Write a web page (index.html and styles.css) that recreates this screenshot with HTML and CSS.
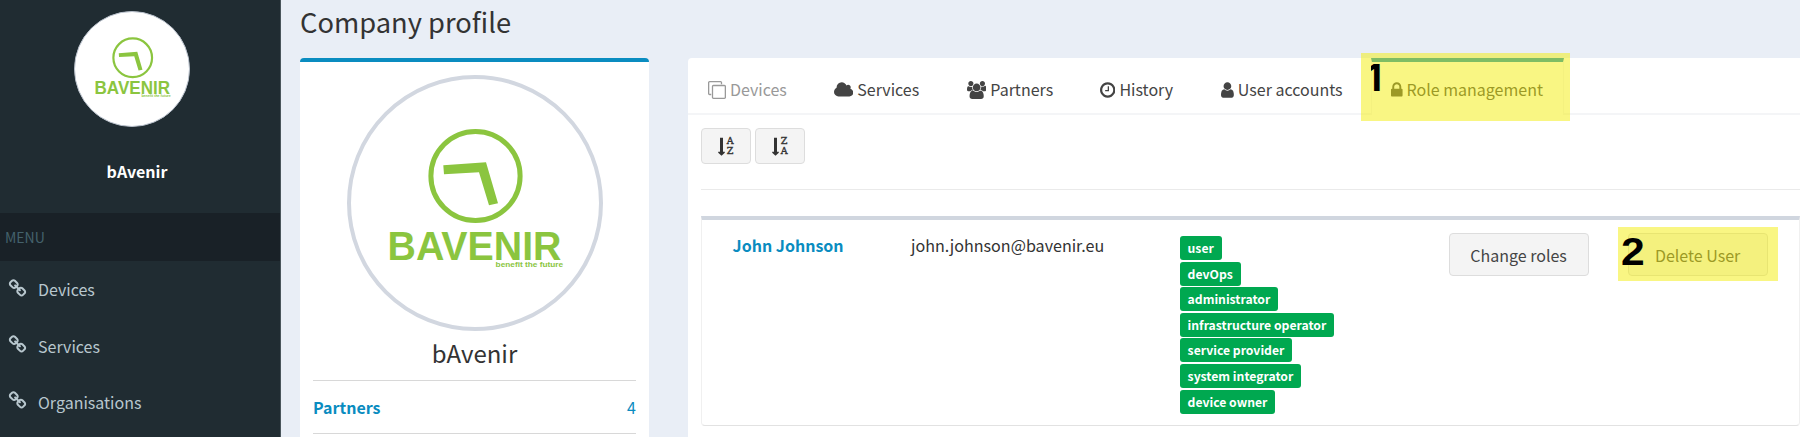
FILE: index.html
```html
<!DOCTYPE html>
<html lang="en">
<head>
<meta charset="utf-8">
<title>Company profile</title>
<link rel="stylesheet" href="styles.css">
</head>
<body>
<svg class="defs" width="0" height="0">
  <symbol id="logo" viewBox="0 0 256 256">
    <circle cx="128.5" cy="101" r="44.6" fill="none" stroke="#8bc53f" stroke-width="5"/>
    <path d="M96.300 90.300L139 87.300L151 128.300L142 130.300L132 97.300L97 99.300z" fill="#8bc53f"/>
    <text class="logo-name" x="40.500" y="184.600" textLength="174" lengthAdjust="spacingAndGlyphs">BAVENIR</text>
    <text class="logo-tag" x="148.600" y="191.800" textLength="67.600" lengthAdjust="spacingAndGlyphs">benefit the future</text>
  </symbol>
  <symbol id="link" viewBox="0 0 1792 1792"><path d="M1520 1216q0-40-28-68l-208-208q-28-28-68-28-42 0-72 32 3 3 19 18.500t21.500 21.500 15 19 13 25.500 3.500 27.500q0 40-28 68t-68 28q-15 0-27.500-3.500t-25.500-13-19-15-21.500-21.500-18.500-19q-33 31-33 73 0 40 28 68l206 207q27 27 68 27 40 0 68-26l147-146q28-28 28-67zm-703-705q0-40-28-68l-206-207q-28-28-68-28-39 0-68 27l-147 146q-28 28-28 67 0 40 28 68l208 208q27 27 68 27 42 0 72-31-3-3-19-18.500t-21.500-21.500-15-19-13-25.500-3.500-27.500q0-40 28-68t68-28q15 0 27.500 3.500t25.500 13 19 15 21.500 21.500 18.500 19q33-31 33-73zm895 705q0 120-85 203l-147 146q-83 83-203 83-121 0-204-85l-206-207q-83-83-83-203 0-123 88-209l-88-88q-86 88-208 88-120 0-204-84l-208-208q-84-84-84-204t85-203l147-146q83-83 203-83 121 0 204 85l206 207q83 83 83 203 0 123-88 209l88 88q86-88 208-88 120 0 204 84l208 208q84 84 84 204z"/></symbol>
</svg>

<div class="app">
  <aside class="sidebar">
    <div class="user-panel">
      <div class="avatar"><svg class="avatar-logo"><use href="#logo"/></svg></div>
      <div class="user-name">bAvenir</div>
    </div>
    <div class="menu-header">MENU</div>
    <nav class="menu">
      <a class="menu-item"><svg class="menu-icon"><use href="#link"/></svg><span>Devices</span></a>
      <a class="menu-item"><svg class="menu-icon"><use href="#link"/></svg><span>Services</span></a>
      <a class="menu-item"><svg class="menu-icon"><use href="#link"/></svg><span>Organisations</span></a>
    </nav>
  </aside>

  <main class="content">
    <h1 class="page-title">Company profile</h1>
    <div class="columns">
      <section class="profile">
        <div class="profile-picture"><svg class="profile-logo"><use href="#logo"/></svg></div>
        <h2 class="profile-name">bAvenir</h2>
        <div class="profile-row"><b>Partners</b><span>4</span></div>
      </section>

      <section class="panel">
        <nav class="tabs">
          <a class="tab tab-devices"><svg class="tab-icon" viewBox="0 0 1792 1792"><path d="M1664 1632v-1088q0-13-9.500-22.500t-22.500-9.500h-1088q-13 0-22.500 9.500t-9.500 22.500v1088q0 13 9.500 22.500t22.500 9.500h1088q13 0 22.500-9.500t9.500-22.500zm128-1088v1088q0 66-47 113t-113 47h-1088q-66 0-113-47t-47-113v-1088q0-66 47-113t113-47h1088q66 0 113 47t47 113zm-384-384v160h-128v-160q0-13-9.500-22.500t-22.500-9.500h-1088q-13 0-22.500 9.500t-9.500 22.500v1088q0 13 9.500 22.500t22.500 9.500h160v128h-160q-66 0-113-47t-47-113v-1088q0-66 47-113t113-47h1088q66 0 113 47t47 113z"/></svg><span>Devices</span></a>
          <a class="tab tab-services"><svg class="tab-icon" viewBox="64 0 1920 1792"><path d="M1984 1152q0 159-112.500 271.500t-271.500 112.500h-1088q-185 0-316.500-131.500t-131.500-316.500q0-132 71-241.500t187-163.500q-2-28-2-43 0-212 150-362t362-150q158 0 286.500 88t187.500 230q70-62 166-62 106 0 181 75t75 181q0 75-41 138 129 30 213 134.500t84 239.500z"/></svg><span>Services</span></a>
          <a class="tab tab-partners"><svg class="tab-icon" viewBox="0 0 1920 1792"><path d="M593 896q-162 5-265 128h-134q-82 0-138-40.500t-56-118.500q0-353 124-353 6 0 43.500 21t97.500 42.500 119 21.500q67 0 133-23-5 37-5 66 0 155 90 286zm1071 637q0 120-73 189.500t-194 69.500h-874q-121 0-194-69.500t-73-189.500q0-53 3.500-103.500t14-109 26.500-108.500 43-97.500 62-81 85.500-53.500 111.500-20q10 0 43 21.500t73 48 107 48 135 21.500 135-21.500 107-48 73-48 43-21.500q61 0 111.500 20t85.500 53.500 62 81 43 97.500 26.500 108.500 14 109 3.500 103.500zm-1024-1277q0 106-75 181t-181 75-181-75-75-181 75-181 181-75 181 75 75 181zm704 384q0 159-112.500 271.500t-271.500 112.500-271.500-112.500-112.500-271.500 112.500-271.500 271.500-112.500 271.500 112.500 112.500 271.500zm576 225q0 78-56 118.500t-138 40.500h-134q-103-123-265-128 90-131 90-286 0-29-5-66 66 23 133 23 59 0 119-21.500t97.500-42.500 43.500-21q124 0 124 353zm-128-609q0 106-75 181t-181 75-181-75-75-181 75-181 181-75 181 75 75 181z"/></svg><span>Partners</span></a>
          <a class="tab tab-history"><svg class="tab-icon" viewBox="128 0 1536 1792"><path d="M1024 544v448q0 14-9 23t-23 9h-320q-14 0-23-9t-9-23v-64q0-14 9-23t23-9h224v-352q0-14 9-23t23-9h64q14 0 23 9t9 23zm416 352q0-148-73-273t-198-198-273-73-273 73-198 198-73 273 73 273 198 198 273 73 273-73 198-198 73-273zm224 0q0 209-103 385.500t-279.500 279.500-385.500 103-385.500-103-279.500-279.500-103-385.500 103-385.500 279.500-279.500 385.500-103 385.500 103 279.500 279.500 103 385.500z"/></svg><span>History</span></a>
          <a class="tab tab-users"><svg class="tab-icon" viewBox="256 0 1280 1792"><path d="M1536 1399q0 109-62.500 187t-150.500 78h-854q-88 0-150.500-78t-62.500-187q0-85 8.500-160.500t31.500-152 58.500-131 94-89 134.500-34.500q131 128 313 128t313-128q76 0 134.500 34.500t94 89 58.500 131 31.500 152 8.500 160.500zm-256-887q0 159-112.500 271.500t-271.500 112.500-271.500-112.500-112.500-271.500 112.500-271.500 271.500-112.500 271.500 112.500 112.500 271.500z"/></svg><span>User accounts</span></a>
          <a class="tab tab-roles"><svg class="tab-icon" viewBox="320 0 1152 1792"><path d="M640 768h512v-192q0-106-75-181t-181-75-181 75-75 181v192zm832 96v576q0 40-28 68t-68 28h-960q-40 0-68-28t-28-68v-576q0-40 28-68t68-28h32v-192q0-184 132-316t316-132 316 132 132 316v192h32q40 0 68 28t28 68z"/></svg><span>Role management</span></a>
        </nav>

        <div class="panel-body">
          <div class="sort-buttons">
            <button class="sort"><svg class="sort-arrow" viewBox="0 0 7 19"><path d="M2 .8h3v14h1.800v1l-3.300 3L.2 15.800v-1H2z"/></svg><span class="sort-letters"><i>A</i><i>Z</i></span></button>
            <button class="sort"><svg class="sort-arrow" viewBox="0 0 7 19"><path d="M2 .8h3v14h1.800v1l-3.300 3L.2 15.800v-1H2z"/></svg><span class="sort-letters"><i>Z</i><i>A</i></span></button>
          </div>
          <hr class="divider">
          <article class="user-box">
            <b class="person">John Johnson</b>
            <span class="email">john.johnson@bavenir.eu</span>
            <div class="roles">
              <span class="role">user</span>
              <span class="role">devOps</span>
              <span class="role">administrator</span>
              <span class="role">infrastructure operator</span>
              <span class="role">service provider</span>
              <span class="role">system integrator</span>
              <span class="role">device owner</span>
            </div>
            <button class="action">Change roles</button>
            <button class="action">Delete User</button>
          </article>
        </div>
      </section>
    </div>
  </main>
</div>

<div class="highlight highlight-tab"><span class="step step-one">1</span></div>
<div class="highlight highlight-delete"><span class="step step-two">2</span></div>
</body>
</html>
```
FILE: styles.css
```css
* { box-sizing: border-box; }
body {
  margin: 0;
  width: 1800px;
  height: 437px;
  overflow: hidden;
  position: relative;
  background: #e9eef6;
  color: #333;
  font: 16px/24px "Noto Sans CJK SC", "Noto Sans", sans-serif;
}
.defs { position: absolute; }
.logo-name { font: bold 40.500px "Liberation Sans", Arial, sans-serif; fill: #8bc53f; }
.logo-tag { font: bold 8px "Liberation Sans", Arial, sans-serif; fill: #8bc53f; }

.app { display: flex; height: 437px; }

.sidebar { width: 281px; flex: none; background: #202c32; border-right: 1px solid #4a555c; }
.user-panel { height: 213px; padding: 11px 0 0 74px; }
.avatar {
  width: 116px; height: 116px;
  padding: 1.500px 0 0 1.500px;
  border: 1px solid #b8c0cb; border-radius: 50%;
  background: #fff;
}
.avatar-logo { display: block; width: 111px; height: 111px; }
.user-name { width: 126px; margin-top: 32px; text-align: center; font-weight: bold; color: #fff; }
.menu-header { height: 48px; padding-left: 5px; background: #192127; color: #44616c; font-size: 14px; line-height: 48px; }
.menu-item { display: flex; align-items: center; height: 56.400px; padding-left: 8px; gap: 11px; color: #b8c7ce; }
.menu-icon { width: 19px; height: 19px; fill: currentColor; margin-top: -2px; }

.content { flex: 1; min-width: 0; padding-left: 19px; }
.page-title { margin: 0; height: 58px; font-size: 27.300px; font-weight: normal; line-height: 42px; }
.columns { display: flex; gap: 39px; }

.profile {
  width: 349px; height: 390px; flex: none;
  padding: 13px 13px 0;
  background: #fff;
  border-top: 4px solid #0a8cc0; border-radius: 4px;
}
.profile-picture { width: 256px; height: 256px; margin: 0 auto; border: 4px solid #d2d7e0; border-radius: 50%; }
.profile-logo { display: block; width: 256px; height: 256px; margin: -4px; }
.profile-name { margin: 0; height: 49px; text-align: center; font-size: 24px; font-weight: normal; line-height: 44px; }
.profile-row {
  display: flex; justify-content: space-between;
  height: 54px; line-height: 53px;
  border: solid #d8d8d8; border-width: 1px 0;
  color: #0a8cc0;
}

.panel { flex: 1; height: 390px; background: #fff; border-radius: 4px 0 0 0; }
.tabs { display: flex; height: 57px; padding-left: 20px; border-bottom: 2px solid #f4f5f7; }
.tab { display: flex; align-items: center; gap: 4px; height: 57px; padding-top: 5px; color: #444; white-space: nowrap; }
.tab-icon { height: 18px; fill: currentColor; margin-top: 1px; }
.tab-devices { width: 126px; color: #999; }
.tab-services { width: 133px; }
.tab-partners { width: 133px; }
.tab-history { width: 121px; }
.tab-users { width: 150px; }
.tab-roles {
  width: 193px;
  padding: 1px 0 0 19px;
  border: solid #f4f5f7; border-width: 0 1px;
  border-top: 4px solid #0a8cc0;
  background: #fff;
}

.panel-body { padding: 13px 0 0 12.600px; }
.sort-buttons { display: flex; gap: 4px; }
.sort {
  display: flex; align-items: center; justify-content: center; gap: 2px;
  width: 50px; height: 36px; padding: 0;
  background: #f4f4f4; border: 1px solid #ddd; border-radius: 4px;
}
.sort-arrow { width: 7px; height: 19px; fill: #333; }
.sort-letters { display: flex; flex-direction: column; font: 9.500px/10px "DejaVu Serif", serif; color: #333; -webkit-text-stroke: .4px #333; }
.sort-letters i { font-style: normal; }
.divider { height: 1px; margin: 25px 0 26px; border: 0; background: #eaeaea; }

.user-box {
  display: grid;
  grid-template-columns: 178.500px 268.500px 269px 179px 140px;
  align-items: start;
  height: 210px;
  padding: 13px 0 0 31px;
  border: 1px solid #f0f0f0; border-top: 4px solid #d0d6df; border-bottom-color: #e2e2e2;
  border-radius: 0 0 4px 4px;
}
.person { color: #0a8cc0; }
.email { font-size: 16.100px; }
.roles { display: flex; flex-direction: column; align-items: flex-start; gap: 1.600px; margin-top: 3px; }
.role {
  height: 24px; padding: 0 8px;
  background: #00a850; border-radius: 3px;
  color: #fff; font-size: 12.200px; font-weight: bold; line-height: 24px;
}
.action {
  width: 140px; height: 43px; padding: 0;
  background: #f4f4f4; border: 1px solid #ddd; border-radius: 4px;
  color: #444; font: inherit;
}

.highlight { position: absolute; background: rgba(243, 237, 8, .5); }
.highlight-tab { left: 1361px; top: 53px; width: 209px; height: 68px; }
.highlight-delete { left: 1618px; top: 227px; width: 160px; height: 54px; }
.step { position: absolute; color: #000; font-weight: bold; line-height: 38px; }
.step-one { left: 5px; top: 6px; font-family: Inter, sans-serif; font-size: 37px; clip-path: inset(0 0 0 5px); }
.step-two { left: 3px; top: 6px; font-family: "Liberation Sans", Arial, sans-serif; font-size: 38px; transform: scaleX(1.120); transform-origin: left; }
```
